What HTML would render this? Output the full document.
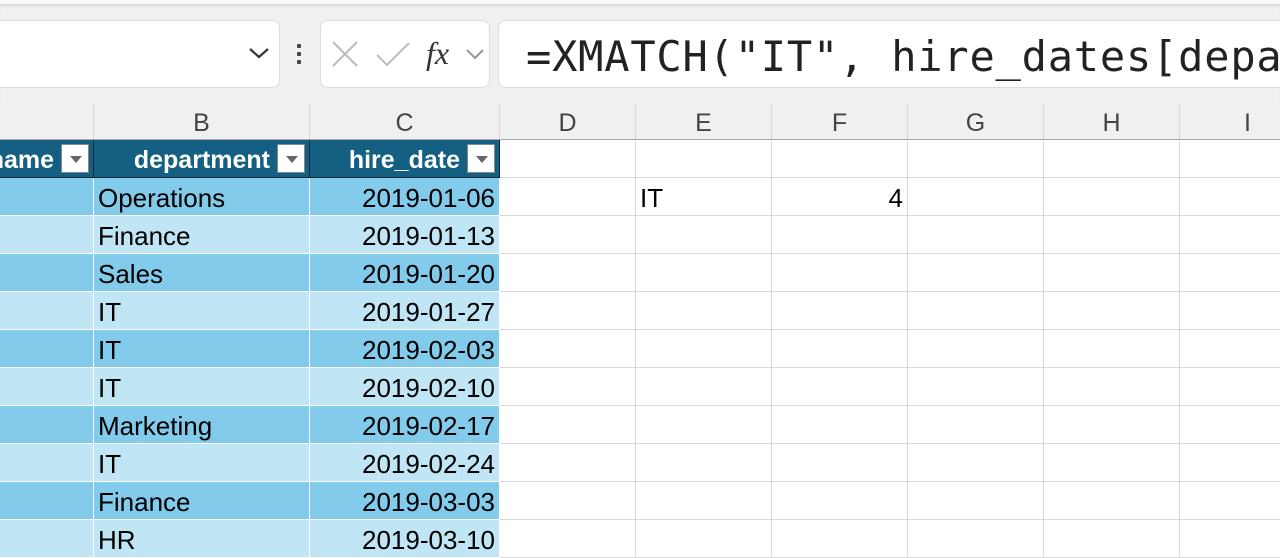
<!DOCTYPE html>
<html><head><meta charset="utf-8"><style>
*{margin:0;padding:0;box-sizing:border-box}
body{width:1280px;height:552px;overflow:hidden;background:#fff;font-family:"Liberation Sans",sans-serif;position:relative}
.top{position:absolute;left:0;top:0;width:1280px;height:104px;background:#f0f0f0;border-top:4px solid #fafafa;box-shadow:inset 0 3px 3px -2px #ccc}
.box{position:absolute;top:20px;height:68px;background:#fff;border:1px solid #dcdcdc;border-radius:8px}
.colhdr{position:absolute;top:104px;height:36px;background:#f0f0f0;border-bottom:1px solid #a8a8a8;width:1280px}
.ch{position:absolute;top:0;height:35px;border-right:1px solid #d8d8d8;text-align:center;font-size:25px;line-height:38px;color:#444}
.cell{position:absolute;height:38px;border-right:1px solid #dadada;border-bottom:1px solid #dadada;font-size:26px;line-height:41px;color:#000;padding:0 4px;white-space:nowrap;overflow:hidden}
.hd{background:#155f82;color:#fff;font-weight:bold;font-size:25px;text-align:right;padding-right:39px;border-right:1px solid #0b2a3a;border-bottom:1px solid #0b2a3a}
.dd{position:absolute;top:4px;right:4px;width:28px;height:29px;background:#fff;border:1px solid #888}
.dd:after{content:"";position:absolute;left:8px;top:11px;border-left:6px solid transparent;border-right:6px solid transparent;border-top:7px solid #666}
.a{background:#83cbeb;border-right:1px solid #fff;border-bottom:1px solid #fff}
.b{background:#c0e6f5;border-right:1px solid #fff;border-bottom:1px solid #fff}
.r{text-align:right}
</style></head><body>
<div class="top"></div>
<div class="box" style="left:-10px;width:290px"></div>
<svg style="position:absolute;left:248px;top:46px" width="22" height="14"><path d="M2 3 L11 11 L20 3" stroke="#333" stroke-width="2.2" fill="none"/></svg>
<div style="position:absolute;left:297px;top:44px;width:4px;height:4px;background:#444;border-radius:1px"></div>
<div style="position:absolute;left:297px;top:52px;width:4px;height:4px;background:#444;border-radius:1px"></div>
<div style="position:absolute;left:297px;top:60px;width:4px;height:4px;background:#444;border-radius:1px"></div>
<div class="box" style="left:320px;width:170px"></div>
<svg style="position:absolute;left:330px;top:38px" width="160" height="34"><path d="M3 4 L27 28 M27 4 L3 28" stroke="#bbb" stroke-width="2" fill="none"/><path d="M47 17 L57 27 L79 5" stroke="#bbb" stroke-width="2" fill="none"/><text x="96" y="26" font-family="Liberation Serif,serif" font-style="italic" font-size="32" fill="#333">fx</text><path d="M137 12 L145 20 L153 12" stroke="#999" stroke-width="2" fill="none"/></svg>
<div class="box" style="left:498px;width:800px"></div>
<div style="position:absolute;left:526px;top:31px;font-family:'DejaVu Sans Mono','Liberation Mono',monospace;font-size:42px;letter-spacing:0.8px;line-height:52px;color:#222;white-space:pre">=XMATCH("IT", hire_dates[depa</div>
<div class="colhdr">
<div class="ch" style="left:0;width:94px"></div>
<div class="ch" style="left:94px;width:216px">B</div>
<div class="ch" style="left:310px;width:190px">C</div>
<div class="ch" style="left:500px;width:136px">D</div>
<div class="ch" style="left:636px;width:136px">E</div>
<div class="ch" style="left:772px;width:136px">F</div>
<div class="ch" style="left:908px;width:136px">G</div>
<div class="ch" style="left:1044px;width:136px">H</div>
<div class="ch" style="left:1180px;width:136px">I</div>
</div>
<div id="g"></div>
<script>
var g=document.getElementById('g'),h='';
var cols=[500,636,772,908,1044,1180];
var dept=['Operations','Finance','Sales','IT','IT','IT','Marketing','IT','Finance','HR'];
var dates=['2019-01-06','2019-01-13','2019-01-20','2019-01-27','2019-02-03','2019-02-10','2019-02-17','2019-02-24','2019-03-03','2019-03-10'];
h+='<div class="cell hd" style="left:0;top:140px;width:94px"><span style="position:absolute;right:39px">name</span><div class="dd"></div></div>';
h+='<div class="cell hd" style="left:94px;top:140px;width:216px">department<div class="dd"></div></div>';
h+='<div class="cell hd" style="left:310px;top:140px;width:190px">hire_date<div class="dd"></div></div>';
for(var r=0;r<11;r++){var y=140+r*38;
 for(var c=0;c<6;c++){var t='',cl='';
  if(r==1&&c==1)t='IT';if(r==1&&c==2){t='4';cl=' r'}
  h+='<div class="cell'+cl+'" style="left:'+cols[c]+'px;top:'+y+'px;width:136px">'+t+'</div>';}
 if(r>0){var k=(r%2)?'a':'b';
  h+='<div class="cell '+k+'" style="left:0;top:'+y+'px;width:94px"></div>';
  h+='<div class="cell '+k+'" style="left:94px;top:'+y+'px;width:216px">'+dept[r-1]+'</div>';
  h+='<div class="cell '+k+' r" style="left:310px;top:'+y+'px;width:190px">'+dates[r-1]+'</div>';}
}
g.innerHTML=h;
</script>
</body></html>
